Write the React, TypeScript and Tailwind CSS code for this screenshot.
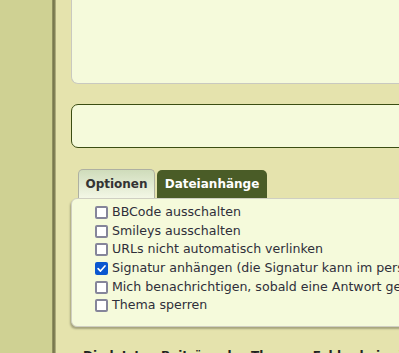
import React from "react";

const options = [
  { label: "BBCode ausschalten", checked: false },
  { label: "Smileys ausschalten", checked: false },
  { label: "URLs nicht automatisch verlinken", checked: false },
  { label: "Signatur anhängen (die Signatur kann im persönlichen Bereich geändert werden)", checked: true },
  { label: "Mich benachrichtigen, sobald eine Antwort geschrieben wurde", checked: false },
  { label: "Thema sperren", checked: false },
];

function Box({ checked }: { checked: boolean }) {
  if (checked) {
    return (
      <span className="flex h-[13px] w-[13px] shrink-0 items-center justify-center rounded-[2px] bg-[#0b57d0]">
        <svg viewBox="0 0 12 12" className="h-[11px] w-[11px]">
          <path d="M2.3 6.2 L4.9 8.8 L9.8 3.2" fill="none" stroke="white" strokeWidth="1.8" strokeLinecap="round" strokeLinejoin="round" />
        </svg>
      </span>
    );
  }
  return <span className="h-[13px] w-[13px] shrink-0 rounded-[2px] border-2 border-[#85859a] bg-white" />;
}

export default function App() {
  return (
    <div className="flex h-[353px] w-[399px] overflow-hidden bg-[#e5e3ad] font-['DejaVu_Sans',Verdana,sans-serif] text-[#333]">
      <div className="w-[52px] shrink-0 bg-[#cfd193]" />
      <div className="w-[4px] shrink-0 bg-gradient-to-r from-[#9c9c6a] via-[#6d6d45] to-[#c4c28f]" />
      <div className="w-[700px] shrink-0 pl-[15px]">
        {/* message textarea (top cut off) */}
        <div className="h-[84px] rounded-bl-[7px] border-b border-l border-[#c9c9c0] bg-[#f5fadb]" />

        {/* subject-like input */}
        <div className="mt-[20px] h-[44px] rounded-[7px] border-[1.5px] border-[#3b4d12] bg-[#f5fadb]" />

        {/* tabs */}
        <div className="ml-[7px] mt-[21px] flex items-end gap-[2px]">
          <div className="flex h-[29px] w-[77px] items-center justify-center rounded-t-[5px] border border-b-0 border-[#aeb0a2] bg-gradient-to-b from-[#cfdcbb] to-[#f3f7e6] text-[12px] font-bold text-[#333]">
            Optionen
          </div>
          <div className="flex h-[28px] w-[110px] items-center justify-center rounded-t-[5px] bg-[#4a5c27] text-[12px] font-bold text-white">
            Dateianhänge
          </div>
        </div>

        {/* options panel */}
        <div className="h-[129px] rounded-[6px] border border-[#cfcfc2] bg-[#f5fadb] pl-[23px] pt-[4px] shadow-[-1px_2px_2px_rgba(0,0,0,0.28)]">
          {options.map((o) => (
            <label key={o.label} className="flex h-[18.7px] items-center gap-[4px] whitespace-nowrap text-[12.6px] text-[#2f2f3a]">
              <Box checked={o.checked} />
              {o.label}
            </label>
          ))}
        </div>

        <div className="ml-[12px] mt-[21px] whitespace-nowrap text-[12px] font-bold leading-[16px] text-[#222]">
          Die letzten Beiträge des Themas: Fehler beim öffnen
        </div>
      </div>
    </div>
  );
}
